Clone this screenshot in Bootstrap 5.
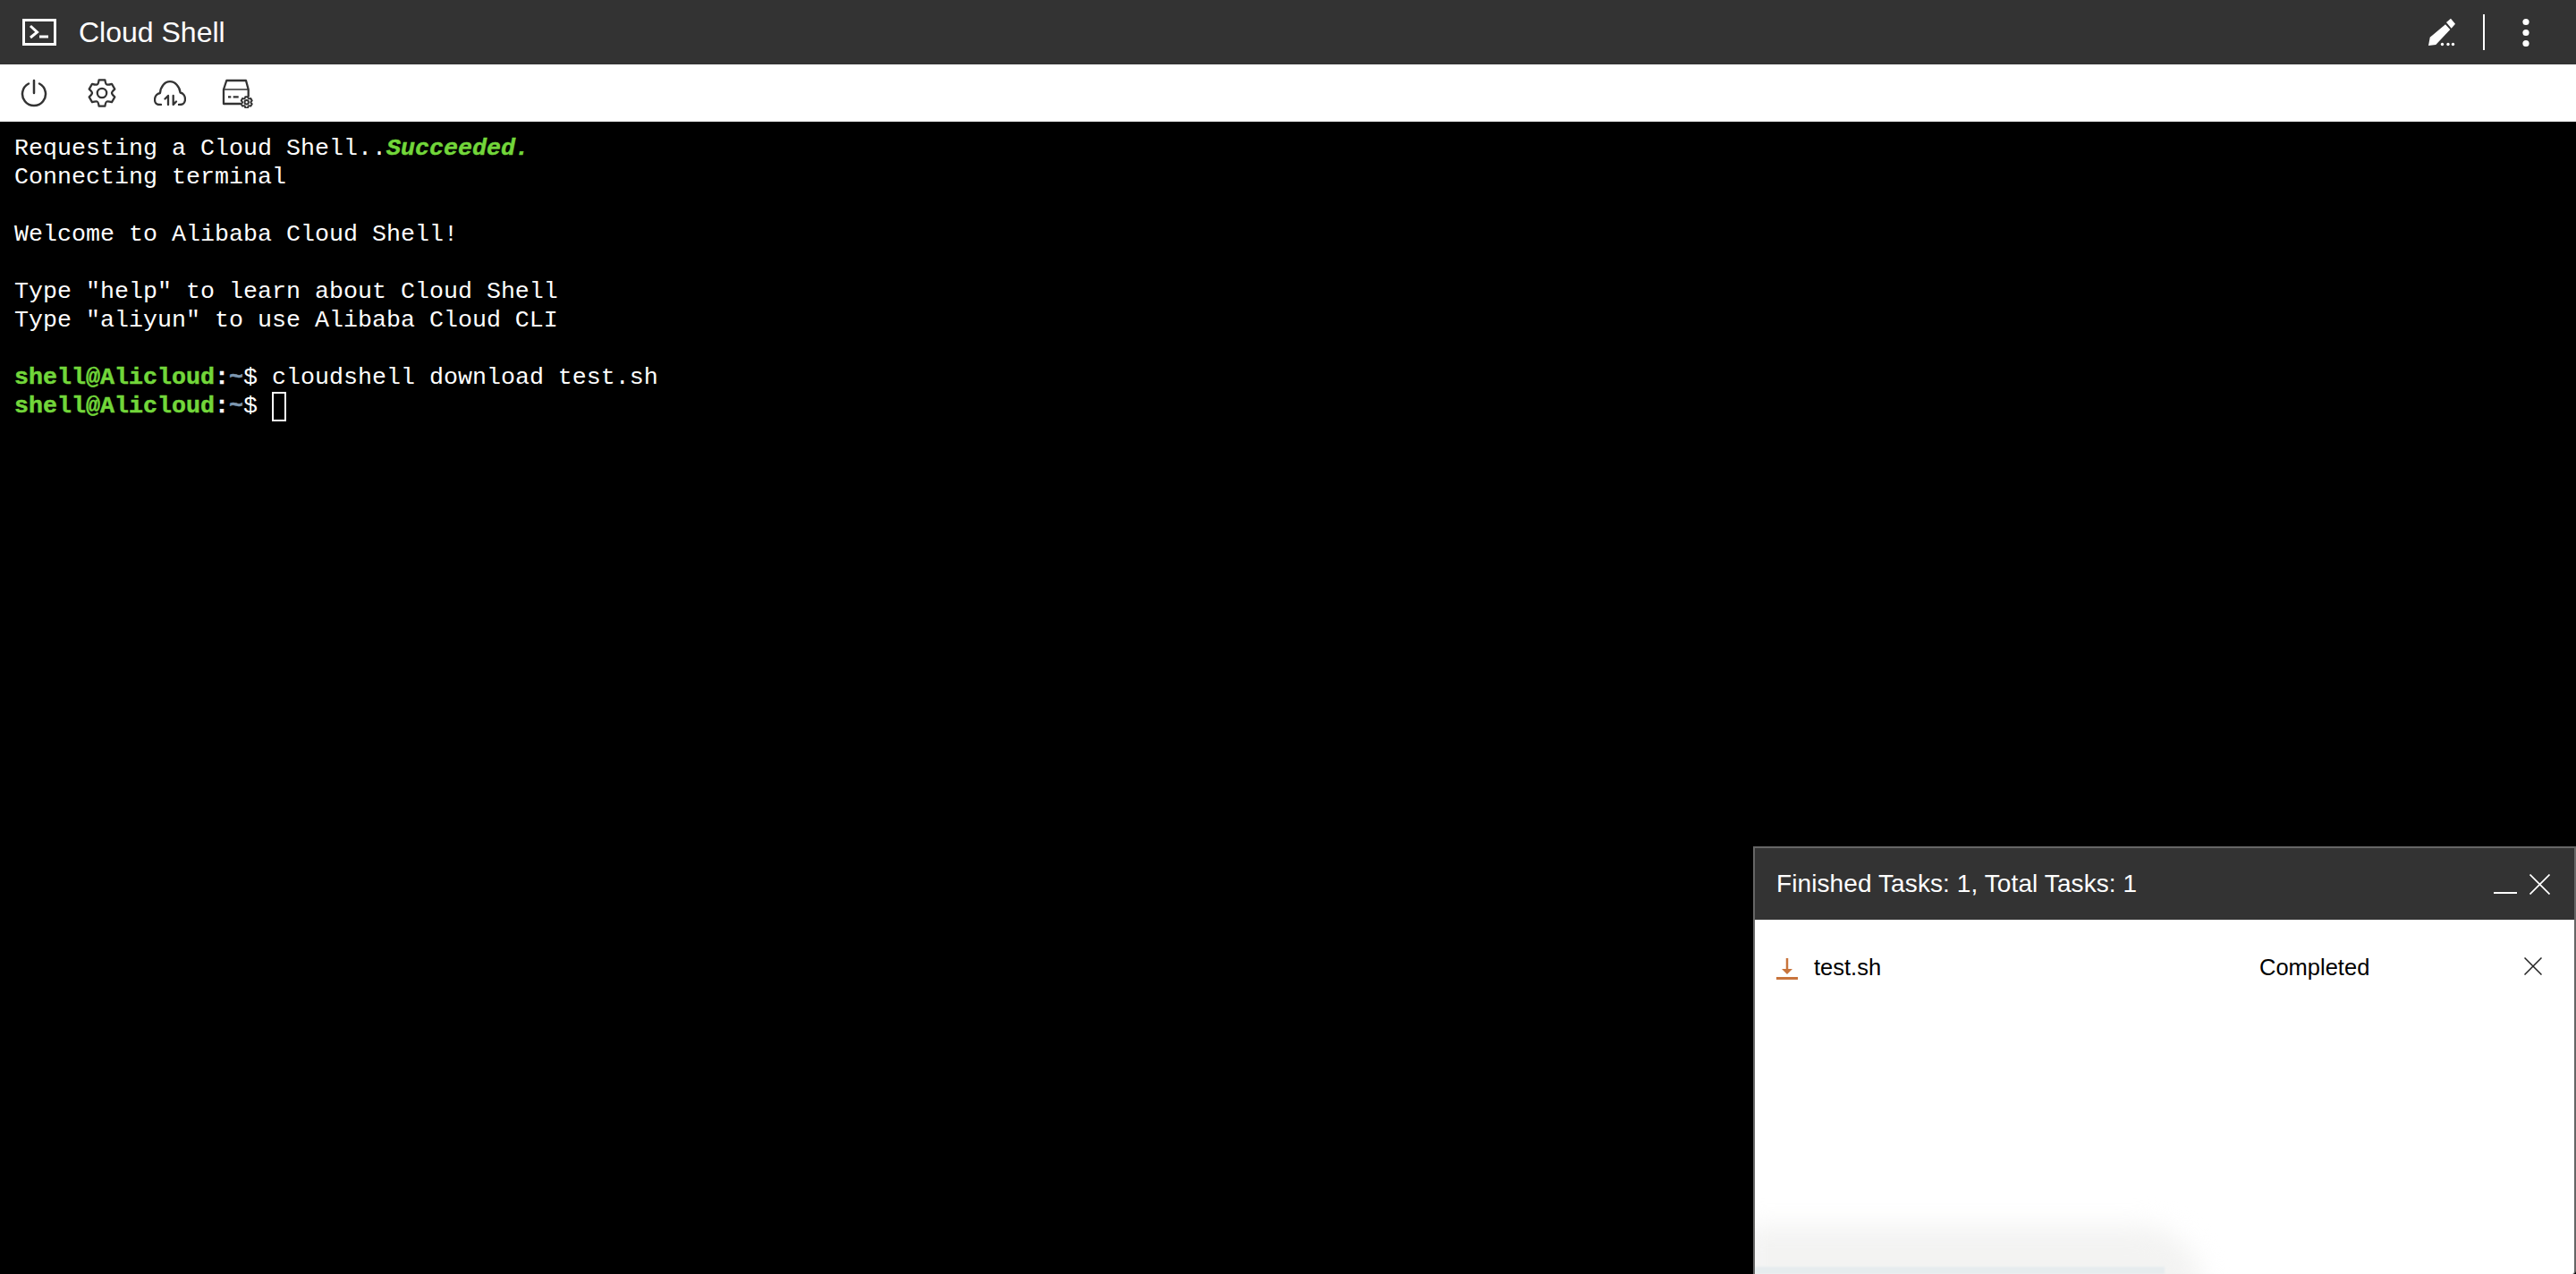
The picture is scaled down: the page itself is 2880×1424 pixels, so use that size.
<!DOCTYPE html>
<html lang="en">
<head>
<meta charset="utf-8">
<title>Cloud Shell</title>
<link rel="stylesheet" href="https://cdn.jsdelivr.net/npm/bootstrap@5.3.0/dist/css/bootstrap.min.css">
<style>
html,body{height:100%;overflow:hidden}
body{background:#000;font-family:"Liberation Sans",Arial,sans-serif}
.app-head{height:72px;background:#333;color:#fff;padding:0 52px 0 25px}
.app-title{font-size:32px;line-height:72px;margin-left:25px}
.head-sep{width:2px;height:40px;background:#fff;margin:0 42px 0 30px}
.app-tools{height:64px;background:#fff}
.tool-slot{width:76px;display:flex;justify-content:center;align-items:center;height:100%}
.term{background:#000;color:#fff;font-family:"Liberation Mono","Courier New",monospace;font-size:26.67px;line-height:32px;padding:14px 16px;white-space:pre;height:1288px;overflow:hidden}
.t-ok,.t-ok-i,.t-tilde,.t-colon{font-weight:700;-webkit-text-stroke:.5px currentColor}
.t-ok,.t-ok-i{color:#72d63a}
.t-ok-i{font-style:italic}
.t-tilde{color:#7d97b0}
.cursor{display:inline-block;width:16px;height:33px;border:2px solid #fff;vertical-align:top}
.task-panel{position:absolute;left:1960px;top:946px;width:920px;height:478px;background:#fff;border:2px solid #666;border-bottom:0;border-bottom-right-radius:4px;overflow:hidden}
.task-head{height:80px;background:#333;color:#fff;font-size:28px;padding:0 27px 0 24px;letter-spacing:.1px}
.task-row{height:106px;padding:0 36px 0 24px;font-size:25.5px;color:#000}
.task-name{width:498px;margin-left:18px}
.task-blur{position:absolute;left:-10px;bottom:-56px;width:510px;height:110px;background:#f3f3f2;border-radius:0 70px 0 0;filter:blur(14px)}
.task-strip{position:absolute;left:0;bottom:0;width:458px;height:8px;background:#e6ecee;filter:blur(1px)}
</style>
</head>
<body>
<header class="app-head d-flex align-items-center">
<svg width="38" height="30" viewBox="0 0 38 30"><rect x="1.500" y="1.500" width="35" height="27" fill="none" stroke="#fff" stroke-width="3"/><path d="M9 8l7.500 7-7.500 6" fill="none" stroke="#fff" stroke-width="3"/><rect x="19" y="18.500" width="10" height="3" fill="#fff"/></svg>
<span class="app-title">Cloud Shell</span>
<span class="ms-auto d-flex align-items-center">
<svg width="32" height="32" viewBox="0 0 32 32" fill="#fff"><path d="M20 7.300l5.300 5.700L9.300 30 1 31l1.700-9.300z"/><path d="M21 5l5-4.300 5 6-4.300 5z"/><circle cx="16.500" cy="29.500" r="1.700"/><circle cx="23" cy="29.500" r="1.700"/><circle cx="28.500" cy="29.500" r="1.700"/></svg>
<span class="head-sep"></span>
<svg width="8" height="32" viewBox="0 0 8 32" fill="#fff"><circle cx="4" cy="4.500" r="3.600"/><circle cx="4" cy="16.500" r="3.600"/><circle cx="4" cy="28.500" r="3.600"/></svg>
</span>
</header>
<nav class="app-tools d-flex">
<span class="tool-slot"><svg width="30" height="32" viewBox="0 0 30 32" fill="none" stroke="#333" stroke-width="2.500" stroke-linecap="round"><path d="M15 2v14"/><path d="M9 5.500A13 13 0 1 0 21 5.500"/></svg></span>
<span class="tool-slot"><svg width="32" height="32" viewBox="0 0 32 32" fill="none" stroke="#333" stroke-width="2.300" stroke-linejoin="round"><path d="M12.600 1.400H19.400Q20 6 21.500 6.500Q23 7 27 5.800L30.300 11.600Q27 14.500 27 16Q27 17.500 30.300 20.400L27 26.200Q23 25 21.500 25.500Q20 26 19.400 30.600H12.600Q12 26 10.500 25.500Q9 25 5 26.200L1.700 20.400Q5 17.500 5 16Q5 14.500 1.700 11.600L5 5.800Q9 7 10.500 6.500Q12 6 12.600 1.400Z"/><circle cx="16" cy="16" r="5.200"/></svg></span>
<span class="tool-slot"><svg width="36" height="28" viewBox="0 0 36 28" fill="none" stroke="#333" stroke-width="2.300" stroke-linecap="round" stroke-linejoin="round"><path d="M8 27H6C2.500 27 1 24 1 21.500C1 17 4 14.500 7 14C7.500 7 12 1.200 18 1.200C24 1.200 29 7 29.500 13.500C33 14 35 17.500 35 21C35 24.500 32.500 27 29 27H28"/><path d="M16 27V17L12.500 20.500"/><path d="M21.700 17V27L25 23.500"/></svg></span>
<span class="tool-slot"><svg width="36" height="33" viewBox="0 0 36 33" fill="none" stroke="#333" stroke-width="2.300" stroke-linejoin="round"><path d="M21.300 28H2V12L5.300 2H27L29.700 12V20.300"/><path d="M2 12H29.700" stroke-width="1.500"/><path d="M7 20.300H10.300M12.700 20.300H18.700"/><g transform="translate(20.980 19.580) scale(.42)" stroke-width="4.800"><path d="M12.600 1.400H19.400Q20 6 21.500 6.500Q23 7 27 5.800L30.300 11.600Q27 14.500 27 16Q27 17.500 30.300 20.400L27 26.200Q23 25 21.500 25.500Q20 26 19.400 30.600H12.600Q12 26 10.500 25.500Q9 25 5 26.200L1.700 20.400Q5 17.500 5 16Q5 14.500 1.700 11.600L5 5.800Q9 7 10.500 6.500Q12 6 12.600 1.400Z"/><circle cx="16" cy="16" r="5.200"/></g></svg></span>
</nav>
<main class="term">Requesting a Cloud Shell..<span class="t-ok-i">Succeeded.</span>
Connecting terminal

Welcome to Alibaba Cloud Shell!

Type "help" to learn about Cloud Shell
Type "aliyun" to use Alibaba Cloud CLI

<span class="t-ok">shell@Alicloud</span><span class="t-colon">:</span><span class="t-tilde">~</span>$ cloudshell download test.sh
<span class="t-ok">shell@Alicloud</span><span class="t-colon">:</span><span class="t-tilde">~</span>$ <span class="cursor"></span></main>
<section class="task-panel">
<div class="task-head d-flex align-items-center">
<span>Finished Tasks: 1, Total Tasks: 1</span>
<svg class="ms-auto" width="26" height="26" viewBox="0 0 26 26"><path d="M0 23h26" stroke="#fff" stroke-width="2"/></svg>
<svg class="task-x" width="23" height="23" viewBox="0 0 23 23" style="margin-left:14px"><path d="M.5 .5l22 22M22.500 .5l-22 22" stroke="#fff" stroke-width="1.700"/></svg>
</div>
<div class="task-row d-flex align-items-center position-relative">
<svg width="24" height="24" viewBox="0 0 24 24" style="margin-top:4px"><path d="M12 0v12" stroke="#c8743c" stroke-width="2.500"/><path d="M6 12h12l-6 6z" fill="#c8743c"/><path d="M0 22.500h24" stroke="#c8743c" stroke-width="3"/></svg>
<span class="task-name">test.sh</span>
<span>Completed</span>
<svg class="ms-auto" width="20" height="20" viewBox="0 0 20 20" style="margin-top:-2px"><path d="M.5 .5l19 19M19.500 .5l-19 19" stroke="#222" stroke-width="1.500"/></svg>
</div>
<div class="task-blur"></div>
<div class="task-strip"></div>
</section>
</body>
</html>
